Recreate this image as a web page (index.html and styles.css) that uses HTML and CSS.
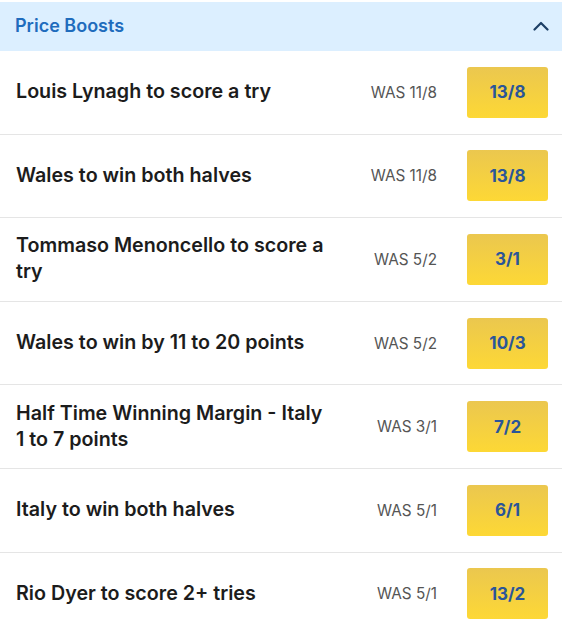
FILE: index.html
```html
<!DOCTYPE html>
<html>
<head>
<meta charset="utf-8">
<link rel="stylesheet" href="styles.css">
</head>
<body>
<section class="panel">
  <header class="panel-head">
    <span class="panel-title">Price Boosts</span>
    <svg class="chev" width="16" height="10" viewBox="0 0 16 10"><path d="M1.5 8.5 L8 2 L14.5 8.5" fill="none" stroke="#1d3f66" stroke-width="2.2" stroke-linecap="round" stroke-linejoin="round"/></svg>
  </header>
  <div class="row"><div class="label">Louis Lynagh to score a try</div><div class="was">WAS 11/8</div><button class="odds">13/8</button></div>
  <div class="row"><div class="label">Wales to win both halves</div><div class="was">WAS 11/8</div><button class="odds">13/8</button></div>
  <div class="row"><div class="label">Tommaso Menoncello to score a try</div><div class="was">WAS 5/2</div><button class="odds">3/1</button></div>
  <div class="row"><div class="label">Wales to win by 11 to 20 points</div><div class="was">WAS 5/2</div><button class="odds">10/3</button></div>
  <div class="row"><div class="label">Half Time Winning Margin - Italy 1 to 7 points</div><div class="was">WAS 3/1</div><button class="odds">7/2</button></div>
  <div class="row"><div class="label">Italy to win both halves</div><div class="was">WAS 5/1</div><button class="odds">6/1</button></div>
  <div class="row"><div class="label">Rio Dyer to score 2+ tries</div><div class="was">WAS 5/1</div><button class="odds">13/2</button></div>
</section>
</body>
</html>
```
FILE: styles.css
```css
html, body { margin: 0; padding: 0; background: #fff; }
body { font-family: Inter, "Noto Sans", sans-serif; }
.panel { width: 562px; }
.panel-head {
  height: 49px;
  margin-top: 2px;
  background: #dcefff;
  display: flex;
  align-items: center;
  justify-content: space-between;
  padding: 0 13px 2px 15px;
  box-sizing: border-box;
}
.panel-title { font-size: 18px; font-weight: 600; color: #1f6cbd; }
.chev { display: block; }
.row {
  height: 83.6px;
  box-sizing: border-box;
  border-bottom: 1px solid #e5e5e5;
  display: flex;
  align-items: center;
  padding: 0 14px 0 16px;
}
.label {
  flex: 1;
  max-width: 312px;
  margin-right: auto;
  font-size: 19.7px;
  font-weight: 600;
  color: #1c1c1c;
  line-height: 26px;
  padding-bottom: 2px;
}
.was {
  font-size: 15.3px;
  color: #555;
  margin-left: 16px;
  margin-right: 30px;
  white-space: nowrap;
}
.odds {
  width: 81px;
  height: 51px;
  border: 0;
  border-radius: 3px;
  background: linear-gradient(#ebc74f, #fdd835);
  color: #2a5599;
  font-family: Inter, "Noto Sans", sans-serif;
  font-size: 17px;
  font-weight: 700;
  padding: 0;
}
```
